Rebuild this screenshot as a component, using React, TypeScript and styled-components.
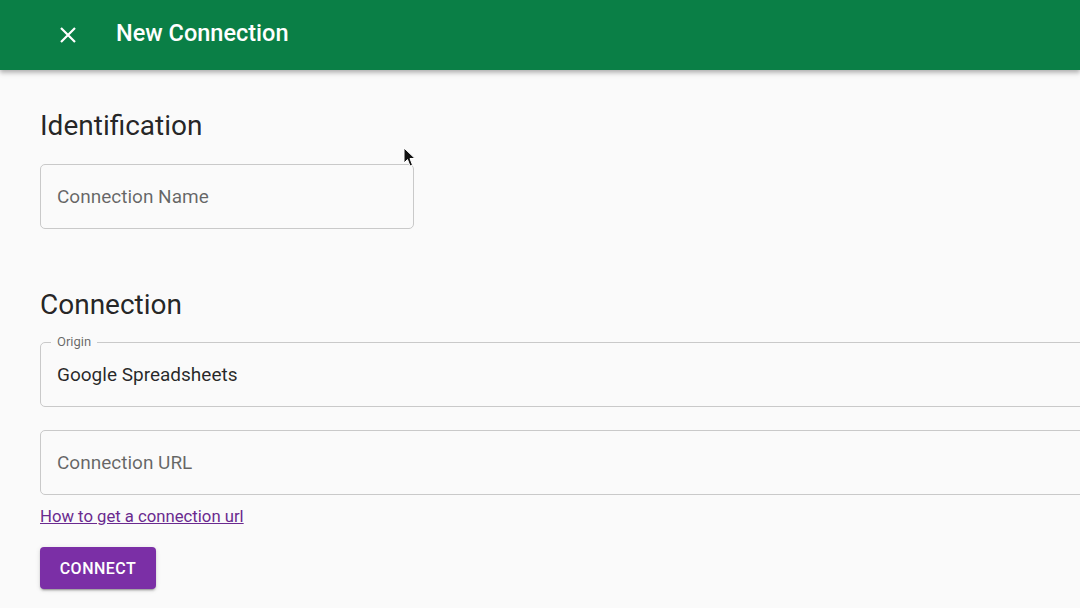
import React, { useState } from "react";
import styled, { createGlobalStyle } from "styled-components";

const GlobalStyle = createGlobalStyle`
  html, body {
    margin: 0;
    padding: 0;
    background: #fafafa;
    font-family: Roboto, "Liberation Sans", sans-serif;
    overflow: hidden;
  }
`;

const Page = styled.div`
  position: relative;
  width: 1080px;
  height: 608px;
  background: #fafafa;
  overflow: hidden;
`;

const AppBar = styled.header`
  display: flex;
  align-items: center;
  height: 70px;
  padding-left: 56px;
  background: #0a7f46;
  color: #fff;
  box-shadow: 0 2px 4px rgba(0, 0, 0, 0.2), 0 4px 5px rgba(0, 0, 0, 0.12);
  position: relative;
  z-index: 1;
  box-sizing: border-box;
`;

const CloseButton = styled.button`
  display: flex;
  align-items: center;
  justify-content: center;
  width: 24px;
  height: 24px;
  padding: 0;
  margin-right: 36px;
  border: none;
  background: transparent;
  color: #fff;
  cursor: pointer;
`;

const Title = styled.h1`
  margin: 0;
  font-size: 23.5px;
  font-weight: 500;
  padding-bottom: 4px;
`;

const Content = styled.main`
  display: flex;
  flex-direction: column;
  padding: 40px 0 0 40px;
`;

const SectionTitle = styled.h2<{ $top?: number }>`
  margin: ${(p) => p.$top ?? 0}px 0 0 0;
  font-size: 28px;
  font-weight: 400;
  line-height: 32px;
  color: rgba(0, 0, 0, 0.87);
`;

const Field = styled.div<{ $width?: number; $top: number }>`
  position: relative;
  margin-top: ${(p) => p.$top}px;
  padding: 0 16px;
  width: ${(p) => (p.$width ? `${p.$width}px` : "1100px")};
  height: 65px;
  box-sizing: border-box;
  border: 1px solid #c9c9c9;
  border-radius: 5px;
  display: flex;
  align-items: center;
`;

const Legend = styled.span`
  position: absolute;
  top: -9px;
  left: 10px;
  padding: 0 6px;
  background: #fafafa;
  font-size: 13px;
  line-height: 16px;
  color: rgba(0, 0, 0, 0.6);
`;

const Input = styled.input`
  border: none;
  outline: none;
  background: transparent;
  width: 100%;
  font-family: inherit;
  font-size: 19px;
  color: rgba(0, 0, 0, 0.85);
  padding: 0;
  &::placeholder {
    color: rgba(0, 0, 0, 0.6);
  }
`;

const Link = styled.a`
  margin-top: 12px;
  font-size: 16.7px;
  line-height: 20px;
  color: #6a2a8f;
  text-decoration: underline;
  align-self: flex-start;
`;

const ConnectButton = styled.button`
  align-self: flex-start;
  margin-top: 20px;
  width: 116px;
  height: 42px;
  border: none;
  border-radius: 4px;
  background: #7b2fa6;
  color: #fff;
  font-family: inherit;
  font-size: 16px;
  font-weight: 500;
  letter-spacing: 0.5px;
  text-transform: uppercase;
  box-shadow: 0 3px 1px -2px rgba(0, 0, 0, 0.2), 0 2px 2px rgba(0, 0, 0, 0.14),
    0 1px 5px rgba(0, 0, 0, 0.12);
  cursor: pointer;
`;

const Cursor = styled.svg`
  position: absolute;
  left: 403px;
  top: 147px;
  pointer-events: none;
`;

const App = () => {
  const [name, setName] = useState("");
  const [url, setUrl] = useState("");

  return (
    <Page>
      <GlobalStyle />
      <AppBar>
        <CloseButton aria-label="close">
          <svg width="20" height="20" viewBox="0 0 20 20">
            <path d="M3 3 L17 17 M17 3 L3 17" stroke="#fff" strokeWidth="2.2" />
          </svg>
        </CloseButton>
        <Title>New Connection</Title>
      </AppBar>
      <Content>
        <SectionTitle>Identification</SectionTitle>
        <Field $width={374} $top={22}>
          <Input
            placeholder="Connection Name"
            value={name}
            onChange={(e) => setName(e.target.value)}
          />
        </Field>
        <SectionTitle $top={60}>Connection</SectionTitle>
        <Field $top={21}>
          <Legend>Origin</Legend>
          <Input value="Google Spreadsheets" readOnly />
        </Field>
        <Field $top={23}>
          <Input
            placeholder="Connection URL"
            value={url}
            onChange={(e) => setUrl(e.target.value)}
          />
        </Field>
        <Link href="#">How to get a connection url</Link>
        <ConnectButton>Connect</ConnectButton>
      </Content>
      <Cursor width="14" height="22" viewBox="0 0 14 22">
        <path
          d="M1 1 L1 16 L4.5 12.5 L7 19 L9.5 18 L7 11.5 L12 11.5 Z"
          fill="#111"
          stroke="#fff"
          strokeWidth="1"
        />
      </Cursor>
    </Page>
  );
};

export default App;
